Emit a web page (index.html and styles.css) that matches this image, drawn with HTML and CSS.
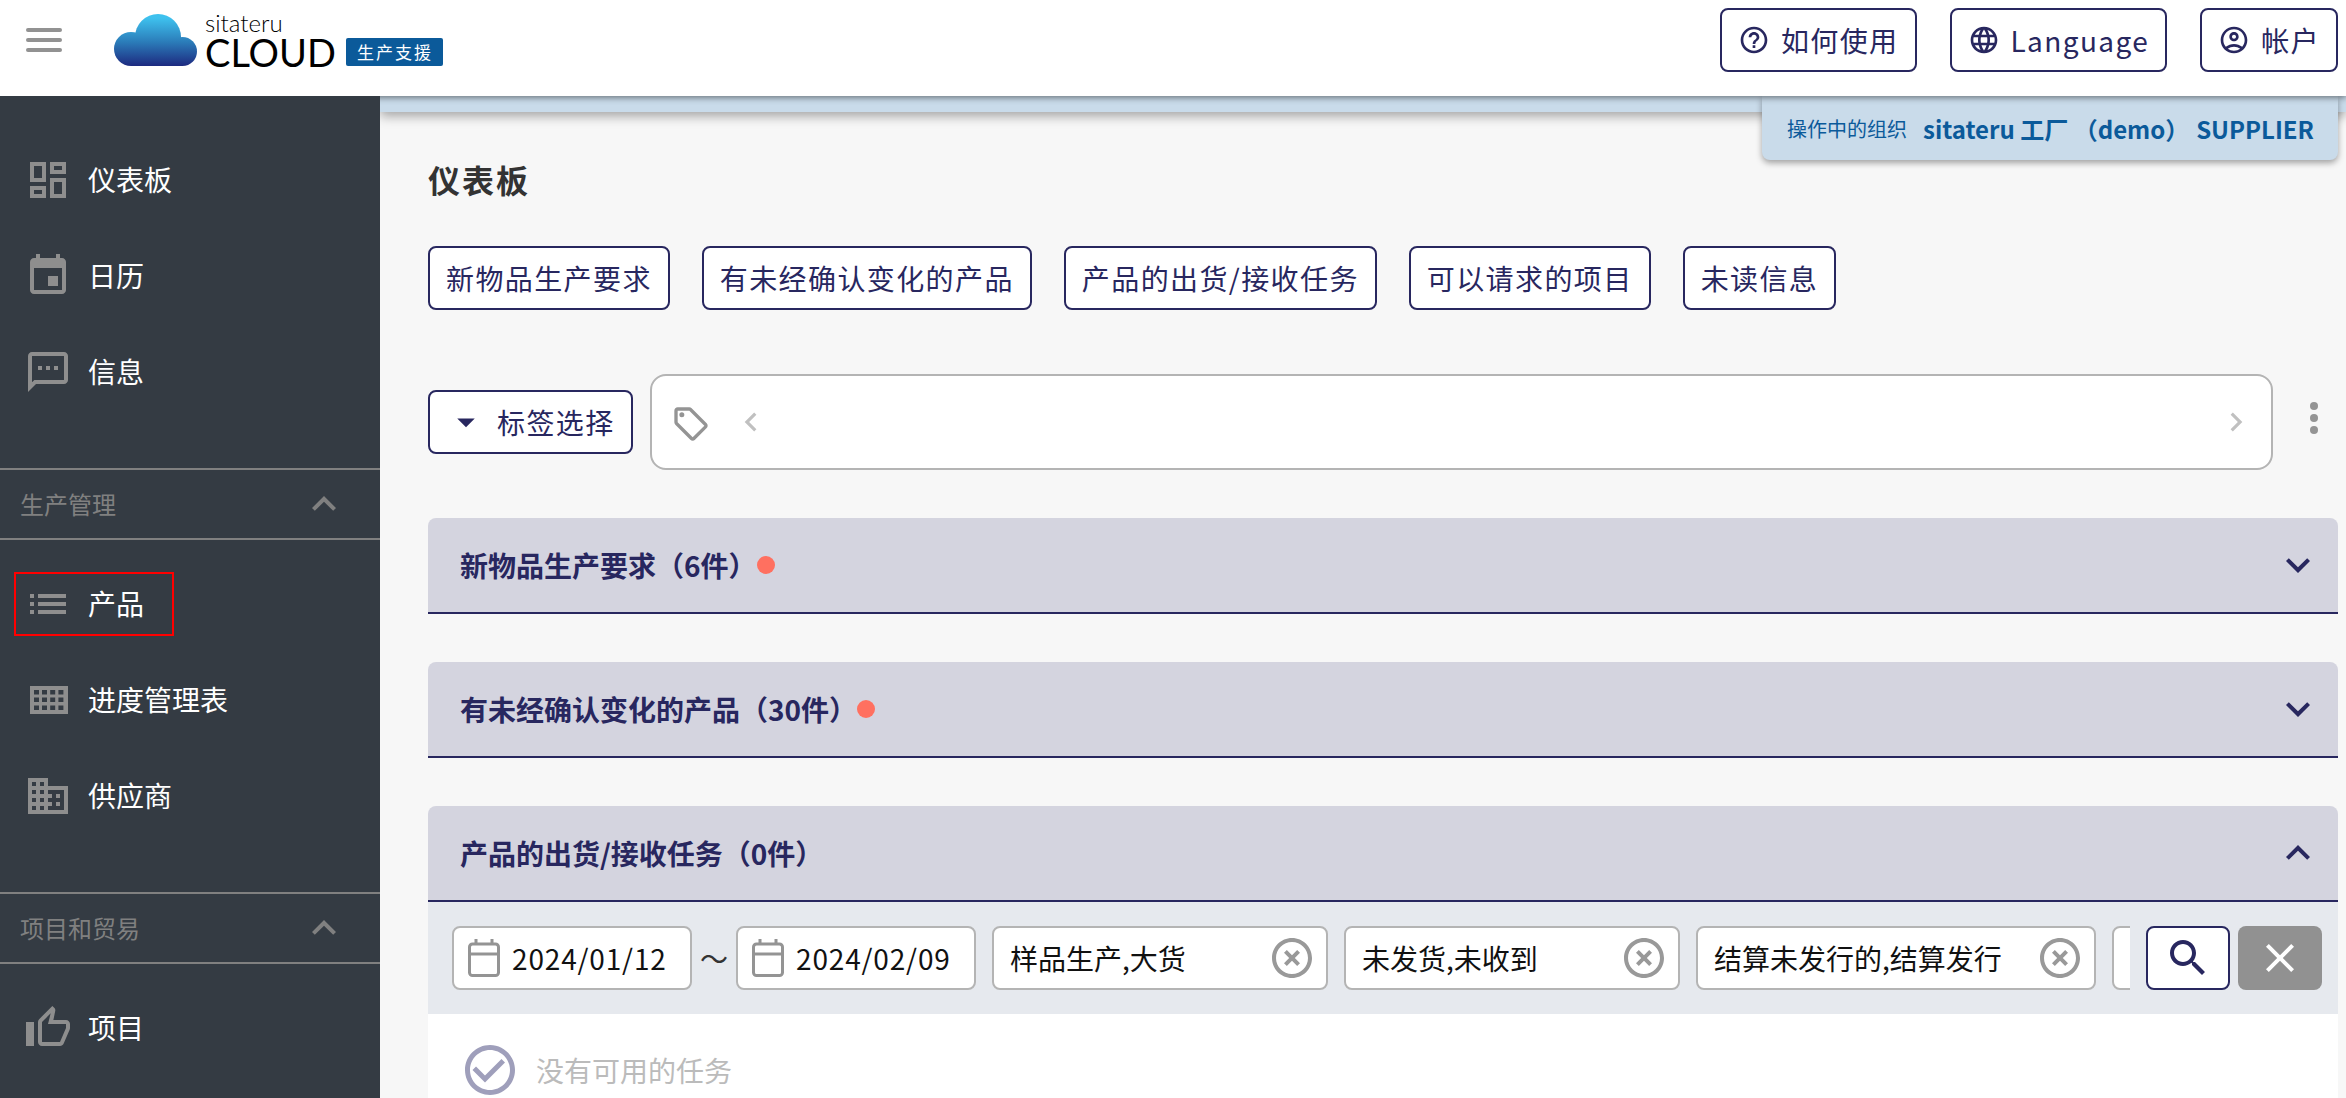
FILE: index.html
```html
<!DOCTYPE html>
<html lang="zh-CN">
<head>
<meta charset="utf-8">
<title>sitateru CLOUD</title>
<link rel="stylesheet" href="styles.css">
</head>
<body>
<header class="topbar">
  <svg class="hamburger" width="36" height="24" viewBox="0 0 36 24"><rect y="0" width="36" height="4" rx="2"/><rect y="10" width="36" height="4" rx="2"/><rect y="20" width="36" height="4" rx="2"/></svg>
  <div class="logo">
    <svg class="cloud" width="83" height="52" viewBox="0 0 83 52">
      <defs><linearGradient id="cg" gradientUnits="userSpaceOnUse" x1="0" y1="4" x2="0" y2="52"><stop offset="0" stop-color="#3ec1ee"/><stop offset=".5" stop-color="#2b7cb9"/><stop offset="1" stop-color="#1d2a80"/></linearGradient></defs>
      <g fill="url(#cg)"><circle cx="44" cy="23" r="23"/><circle cx="17" cy="35" r="17"/><circle cx="68.5" cy="37.5" r="14.5"/><rect x="17" y="28" width="52" height="24"/></g>
    </svg>
    <div class="wordmark"><span class="wm-small">sitateru</span><span class="wm-big">CLOUD</span></div>
    <span class="logo-badge">生产支援</span>
  </div>
  <nav class="top-actions">
    <a class="btn"><svg class="ic32" viewBox="0 0 24 24"><path d="M11 18h2v-2h-2v2zm1-16C6.48 2 2 6.48 2 12s4.48 10 10 10 10-4.48 10-10S17.52 2 12 2zm0 18c-4.41 0-8-3.59-8-8s3.59-8 8-8 8 3.59 8 8-3.59 8-8 8zm0-14c-2.21 0-4 1.79-4 4h2c0-1.1.9-2 2-2s2 .9 2 2c0 2-3 1.75-3 5h2c0-2.25 3-2.5 3-5 0-2.21-1.79-4-4-4z"/></svg>如何使用</a>
    <a class="btn"><svg class="ic32" viewBox="0 0 24 24"><path d="M11.99 2C6.47 2 2 6.48 2 12s4.47 10 9.99 10C17.52 22 22 17.52 22 12S17.52 2 11.99 2zm6.93 6h-2.95c-.32-1.25-.78-2.45-1.38-3.56 1.84.63 3.37 1.91 4.33 3.56zM12 4.04c.83 1.2 1.48 2.53 1.91 3.96h-3.82c.43-1.43 1.08-2.76 1.91-3.96zM4.26 14C4.1 13.36 4 12.69 4 12s.1-1.36.26-2h3.38c-.08.66-.14 1.32-.14 2 0 .68.06 1.34.14 2H4.26zm.82 2h2.95c.32 1.25.78 2.45 1.38 3.56-1.84-.63-3.37-1.9-4.33-3.56zm2.95-8H5.08c.96-1.66 2.49-2.93 4.33-3.56C8.81 5.55 8.35 6.75 8.03 8zM12 19.96c-.83-1.2-1.48-2.53-1.91-3.96h3.82c-.43 1.43-1.08 2.76-1.91 3.96zM14.34 14H9.66c-.09-.66-.16-1.32-.16-2 0-.68.07-1.35.16-2h4.68c.09.65.16 1.32.16 2 0 .68-.07 1.34-.16 2zm.25 5.56c.6-1.11 1.06-2.31 1.38-3.56h2.95c-.96 1.65-2.49 2.93-4.33 3.56zM16.36 14c.08-.66.14-1.32.14-2 0-.68-.06-1.34-.14-2h3.38c.16.64.26 1.31.26 2s-.1 1.36-.26 2h-3.38z"/></svg>Language</a>
    <a class="btn"><svg class="ic32" viewBox="0 0 24 24"><path d="M12 2C6.48 2 2 6.48 2 12s4.48 10 10 10 10-4.48 10-10S17.52 2 12 2zM7.35 18.5C8.66 17.56 10.26 17 12 17s3.34.56 4.65 1.5c-1.31.94-2.91 1.5-4.65 1.5s-3.34-.56-4.65-1.5zm10.79-1.38C16.45 15.8 14.32 15 12 15s-4.45.8-6.14 2.12C4.7 15.73 4 13.95 4 12c0-4.42 3.58-8 8-8s8 3.58 8 8c0 1.95-.7 3.73-1.86 5.12zM12 6c-1.93 0-3.5 1.57-3.5 3.5S10.07 13 12 13s3.5-1.57 3.5-3.5S13.93 6 12 6zm0 5c-.83 0-1.5-.67-1.5-1.5S11.17 8 12 8s1.5.67 1.5 1.5S12.83 11 12 11z"/></svg>帐户</a>
  </nav>
</header>

<div class="shell">
  <aside class="sidebar">
    <ul class="nav-group first">
      <li class="nav-item"><svg class="ic48" viewBox="0 0 24 24"><path d="M19 5v2h-4V5h4M9 5v6H5V5h4m10 8v6h-4v-6h4M9 17v2H5v-2h4M21 3h-8v6h8V3zM11 3H3v10h8V3zm10 8h-8v10h8V11zm-10 4H3v6h8v-6z"/></svg>仪表板</li>
      <li class="nav-item"><svg class="ic48" viewBox="0 0 24 24"><path d="M17 12h-5v5h5v-5zM16 1v2H8V1H6v2H5c-1.11 0-1.99.9-1.99 2L3 19c0 1.1.89 2 2 2h14c1.1 0 2-.9 2-2V5c0-1.1-.9-2-2-2h-1V1h-2zm3 18H5V8h14v11z"/></svg>日历</li>
      <li class="nav-item"><svg class="ic48" viewBox="0 0 24 24"><path d="M20 2H4c-1.1 0-1.99.9-1.99 2L2 22l4-4h14c1.1 0 2-.9 2-2V4c0-1.1-.9-2-2-2zm0 14H5.17L4 17.17V4h16v12zM7 9h2v2H7zm4 0h2v2h-2zm4 0h2v2h-2z"/></svg>信息</li>
    </ul>
    <div class="nav-section">生产管理<svg class="ic48" viewBox="0 0 24 24"><path d="M12 8l-6 6 1.41 1.41L12 10.83l4.59 4.58L18 14z"/></svg></div>
    <ul class="nav-group">
      <li class="nav-item marked"><svg class="ic48" viewBox="0 0 24 24"><path d="M3 13h2v-2H3v2zm0 4h2v-2H3v2zm0-8h2V7H3v2zm4 4h14v-2H7v2zm0 4h14v-2H7v2zM7 7v2h14V7H7z"/></svg>产品</li>
      <li class="nav-item"><svg class="ic48" viewBox="0 0 48 48"><path fill-rule="evenodd" d="M6 10h38v28H6zM10 14v4.500h5V14zm8 0v4.500h5V14zm8.200 0v4.500h5V14zm8.200 0v4.500h5V14zM10 21.500V26h5v-4.500zm8 0V26h5v-4.500zm8.200 0V26h5v-4.500zm8.200 0V26h5v-4.500zM10 29.500V34h5v-4.500zm8 0V34h5v-4.500zm8.200 0V34h5v-4.500zm8.200 0V34h5v-4.500z"/></svg>进度管理表</li>
      <li class="nav-item"><svg class="ic48" viewBox="0 0 24 24"><path d="M12 7V3H2v18h20V7H12zM6 19H4v-2h2v2zm0-4H4v-2h2v2zm0-4H4V9h2v2zm0-4H4V5h2v2zm4 12H8v-2h2v2zm0-4H8v-2h2v2zm0-4H8V9h2v2zm0-4H8V5h2v2zm10 12h-8v-2h2v-2h-2v-2h2v-2h-2V9h8v10zm-2-8h-2v2h2v-2zm0 4h-2v2h2v-2z"/></svg>供应商</li>
    </ul>
    <div class="nav-section">项目和贸易<svg class="ic48" viewBox="0 0 24 24"><path d="M12 8l-6 6 1.41 1.41L12 10.83l4.59 4.58L18 14z"/></svg></div>
    <ul class="nav-group">
      <li class="nav-item"><svg class="ic48" viewBox="0 0 24 24"><path d="M9 21h9c.83 0 1.54-.5 1.84-1.22l3.02-7.05c.09-.23.14-.47.14-.73v-2c0-1.1-.9-2-2-2h-6.31l.95-4.57.03-.32c0-.41-.17-.79-.44-1.06L14.17 1 7.58 7.59C7.22 7.95 7 8.45 7 9v10c0 1.1.9 2 2 2zM9 9l4.34-4.34L12 10h9v2l-3 7H9V9zM1 9h4v12H1z"/></svg>项目</li>
    </ul>
  </aside>

  <main class="main">
    <div class="org-strip"></div>
    <div class="org-tab"><span class="org-label">操作中的组织</span><span class="org-name">sitateru 工厂 （demo）</span><span class="org-role">SUPPLIER</span></div>
    <div class="content">
      <h1 class="title">仪表板</h1>
      <div class="quick-links">
        <a class="btn">新物品生产要求</a>
        <a class="btn">有未经确认变化的产品</a>
        <a class="btn">产品的出货/接收任务</a>
        <a class="btn">可以请求的项目</a>
        <a class="btn">未读信息</a>
      </div>
      <div class="tag-row">
        <a class="btn tag-btn"><svg class="caret" viewBox="0 0 24 24"><path d="M7 10l5 5 5-5z"/></svg>标签选择</a>
        <div class="tag-box">
          <svg class="tag-icon" viewBox="0 0 24 24"><path d="M21.41 11.58l-9-9C12.05 2.22 11.55 2 11 2H4c-1.1 0-2 .9-2 2v7c0 .55.22 1.05.59 1.42l9 9c.36.36.86.58 1.41.58s1.05-.22 1.41-.59l7-7c.37-.36.59-.86.59-1.41s-.23-1.06-.59-1.42zM13 20.01L4 11V4h7v-.01l9 8.99-7 7.03z"/><circle cx="6.500" cy="6.500" r="1.500"/></svg>
          <svg class="tag-chev" viewBox="0 0 24 24"><path d="M15.41 7.41L14 6l-6 6 6 6 1.41-1.41L10.83 12z"/></svg>
          <span class="grow"></span>
          <svg class="tag-chev" viewBox="0 0 24 24"><path d="M10 6L8.590 7.410 13.170 12l-4.580 4.590L10 18l6-6z"/></svg>
        </div>
        <svg class="more" viewBox="0 0 48 48"><circle cx="24" cy="12" r="4"/><circle cx="24" cy="24" r="4"/><circle cx="24" cy="36" r="4"/></svg>
      </div>

      <section class="acc">
        <div class="acc-head"><span class="acc-title">新物品生产要求（6件）</span><i class="dot"></i><svg class="ic48 acc-chev" viewBox="0 0 24 24"><path d="M16.590 8.590L12 13.170 7.410 8.590 6 10l6 6 6-6z"/></svg></div>
      </section>
      <section class="acc">
        <div class="acc-head"><span class="acc-title">有未经确认变化的产品（30件）</span><i class="dot"></i><svg class="ic48 acc-chev" viewBox="0 0 24 24"><path d="M16.590 8.590L12 13.170 7.410 8.590 6 10l6 6 6-6z"/></svg></div>
      </section>
      <section class="acc">
        <div class="acc-head"><span class="acc-title">产品的出货/接收任务（0件）</span><svg class="ic48 acc-chev" viewBox="0 0 24 24"><path d="M12 8l-6 6 1.41 1.41L12 10.83l4.59 4.58L18 14z"/></svg></div>
        <div class="filter-bar">
          <div class="filters">
            <div class="field date"><svg class="cal" viewBox="0 0 32 38"><path d="M8 0v6M24 0v6"/><rect x="1.500" y="5" width="29" height="31.500" rx="3"/><path d="M1.500 15h29"/></svg>2024/01/12</div>
            <span class="tilde">～</span>
            <div class="field date"><svg class="cal" viewBox="0 0 32 38"><path d="M8 0v6M24 0v6"/><rect x="1.500" y="5" width="29" height="31.500" rx="3"/><path d="M1.500 15h29"/></svg>2024/02/09</div>
            <div class="field sel">样品生产,大货<svg class="ic48 clear" viewBox="0 0 24 24"><path d="M14.59 8L12 10.59 9.41 8 8 9.41 10.59 12 8 14.59 9.41 16 12 13.41 14.59 16 16 14.59 13.41 12 16 9.41 14.59 8zM12 2C6.47 2 2 6.47 2 12s4.47 10 10 10 10-4.47 10-10S17.53 2 12 2zm0 18c-4.41 0-8-3.59-8-8s3.59-8 8-8 8 3.59 8 8-3.59 8-8 8z"/></svg></div>
            <div class="field sel">未发货,未收到<svg class="ic48 clear" viewBox="0 0 24 24"><path d="M14.59 8L12 10.59 9.41 8 8 9.41 10.59 12 8 14.59 9.41 16 12 13.41 14.59 16 16 14.59 13.41 12 16 9.41 14.59 8zM12 2C6.47 2 2 6.47 2 12s4.47 10 10 10 10-4.47 10-10S17.53 2 12 2zm0 18c-4.41 0-8-3.59-8-8s3.59-8 8-8 8 3.59 8 8-3.59 8-8 8z"/></svg></div>
            <div class="field sel wide">结算未发行的,结算发行<svg class="ic48 clear" viewBox="0 0 24 24"><path d="M14.59 8L12 10.59 9.41 8 8 9.41 10.59 12 8 14.59 9.41 16 12 13.41 14.59 16 16 14.59 13.41 12 16 9.41 14.59 8zM12 2C6.47 2 2 6.47 2 12s4.47 10 10 10 10-4.47 10-10S17.53 2 12 2zm0 18c-4.41 0-8-3.59-8-8s3.59-8 8-8 8 3.59 8 8-3.59 8-8 8z"/></svg></div>
            <div class="field sel"></div>
          </div>
          <a class="icon-btn search"><svg class="ic48" viewBox="0 0 24 24"><path d="M15.5 14h-.79l-.28-.27C15.41 12.59 16 11.11 16 9.5 16 5.91 13.09 3 9.5 3S3 5.91 3 9.5 5.91 16 9.5 16c1.61 0 3.09-.59 4.23-1.57l.27.28v.79l5 4.99L20.49 19l-4.99-5zm-6 0C7.010 14 5 11.990 5 9.500S7.010 5 9.500 5 14 7.010 14 9.500 11.990 14 9.500 14z"/></svg></a>
          <a class="icon-btn reset"><svg class="ic48" viewBox="0 0 24 24"><path d="M19 6.410L17.590 5 12 10.590 6.410 5 5 6.410 10.590 12 5 17.590 6.410 19 12 13.410 17.590 19 19 17.590 13.410 12z"/></svg></a>
        </div>
        <div class="acc-body">
          <svg class="done" viewBox="0 0 24 24"><path d="M16.590 7.580L10 14.170l-3.590-3.580L5 12l5 5 8-8zM12 2C6.480 2 2 6.480 2 12s4.480 10 10 10 10-4.480 10-10S17.520 2 12 2zm0 18c-4.420 0-8-3.580-8-8s3.580-8 8-8 8 3.580 8 8-3.580 8-8 8z"/></svg>
          <span class="empty-text">没有可用的任务</span>
        </div>
      </section>
    </div>
  </main>
</div>
</body>
</html>
```

FILE: styles.css
```css
*, *::before, *::after { box-sizing: border-box; }
html, body { margin: 0; padding: 0; height: 100%; overflow: hidden; }
body {
  display: flex;
  flex-direction: column;
  background: #f7f7f7;
  font-family: "Noto Sans CJK SC", "Noto Sans", sans-serif;
  font-size: 28px;
  color: #111;
}
ul { list-style: none; margin: 0; padding: 0; }
svg { display: block; flex: none; }
.ic48 { width: 48px; height: 48px; }
.ic32 { width: 32px; height: 32px; fill: #28275f; }

/* top bar */
.topbar {
  position: relative;
  z-index: 1;
  flex: none;
  display: flex;
  align-items: flex-start;
  height: 96px;
  padding: 8px 8px 0 26px;
  background: #fff;
  box-shadow: 0 2px 6px rgba(0, 0, 0, .45);
}
.hamburger { fill: #929292; margin-top: 20px; }
.logo { display: flex; align-items: flex-end; margin: 6px 0 0 52px; height: 52px; }
.wordmark { display: flex; flex-direction: column; margin-left: 8px; font-family: Lato, sans-serif; color: #000; }
.wm-small { font-size: 24px; line-height: 22px; font-weight: 300; margin-bottom: 4px; }
.wm-big { font-size: 38px; line-height: 28px; font-weight: 400; }
.logo-badge {
  margin-left: 10px;
  height: 28px;
  padding: 0 10px 0 11px;
  background: #0b5a9a;
  border-radius: 2px;
  color: #fff;
  font-size: 17px;
  line-height: 28px;
  letter-spacing: 2px;
  white-space: nowrap;
}
.top-actions { display: flex; gap: 33px; margin-left: auto; }
.btn {
  display: inline-flex;
  align-items: center;
  gap: 11px;
  height: 64px;
  padding: 0 16px;
  border: 2px solid #28275f;
  border-radius: 8px;
  background: #fff;
  color: #28275f;
  font-size: 28px;
  letter-spacing: 1.4px;
  white-space: nowrap;
}

/* shell */
.shell { flex: 1; display: flex; min-height: 0; }

/* sidebar */
.sidebar {
  position: relative;
  z-index: 2;
  flex: none;
  width: 380px;
  background: #343b43;
  color: #fff;
}
.nav-group { padding: 16px 0 48px; }
.nav-group.first { padding-top: 36px; }
.nav-item {
  position: relative;
  display: flex;
  align-items: center;
  gap: 16px;
  height: 96px;
  padding: 0 0 2px 24px;
  font-size: 28px;
}
.nav-item svg { fill: #8e8e8e; margin-top: 2px; }
.nav-item.marked::after {
  content: "";
  position: absolute;
  left: 14px;
  top: 16px;
  width: 160px;
  height: 64px;
  border: 2px solid #f00;
}
.nav-section {
  display: flex;
  align-items: center;
  justify-content: space-between;
  height: 72px;
  padding: 0 32px 2px 20px;
  border-top: 2px solid #808080;
  border-bottom: 2px solid #808080;
  color: #808080;
  font-size: 24px;
}
.nav-section svg { fill: #808080; margin-top: 2px; }

/* main */
.main { position: relative; flex: 1; min-width: 0; }
.org-strip {
  height: 16px;
  background: #c9dbea;
  box-shadow: 0 4px 12px rgba(0, 0, 0, .35);
}
.org-tab {
  position: absolute;
  top: 0;
  right: 8px;
  width: 576px;
  height: 64px;
  padding: 0 24px 0 25px;
  display: flex;
  align-items: center;
  background: #c9dbea;
  border-radius: 0 0 8px 8px;
  box-shadow: 0 3px 6px rgba(0, 0, 0, .35);
  color: #0b5a9a;
  white-space: nowrap;
}
.org-label { font-size: 20px; margin-right: 16px; }
.org-name, .org-role { font-size: 24px; font-weight: 700; }
.org-role { margin-left: auto; }

.content { padding: 44px 8px 0 48px; }
.title { margin: 0; font-size: 32px; line-height: 46px; font-weight: 700; letter-spacing: 2px; color: #333; }
.quick-links { display: flex; gap: 32px; margin-top: 44px; }
.tag-row { display: flex; align-items: center; gap: 17px; margin-top: 64px; }
.tag-btn { padding: 0 16px 0 15px; gap: 10px; }
.caret { width: 42px; height: 42px; fill: #28275f; }
.tag-box {
  flex: 1;
  display: flex;
  align-items: center;
  height: 96px;
  padding: 0 16px 0 19px;
  border: 2px solid #b4b4b4;
  border-radius: 16px;
  background: #fff;
}
.tag-icon { width: 40px; height: 40px; fill: #949494; margin-top: 4px; }
.tag-chev { width: 38px; height: 38px; fill: #c0c0c0; }
.tag-box .tag-icon + .tag-chev { margin-left: 21px; }
.grow { flex: 1; }
.more { width: 48px; height: 48px; fill: #949494; margin-top: -8px; }

/* accordions */
.acc { margin-top: 48px; }
.acc-head {
  display: flex;
  align-items: center;
  height: 96px;
  padding: 0 16px 0 32px;
  background: #d4d4df;
  border-bottom: 2px solid #28275f;
  border-radius: 8px 8px 0 0;
  color: #28275f;
}
.acc-title { font-size: 28px; font-weight: 700; }
.dot { width: 18px; height: 18px; margin-left: 0; border-radius: 50%; background: #ff7060; }
.acc-chev { margin-left: auto; fill: #28275f; }

.filter-bar {
  display: flex;
  align-items: center;
  height: 112px;
  padding: 0 16px 0 24px;
  background: #e6e9ee;
}
.filters { flex: 1; min-width: 0; display: flex; align-items: center; gap: 16px; overflow: hidden; margin-right: 16px; }
.field {
  flex: none;
  display: flex;
  align-items: center;
  height: 64px;
  border: 2px solid #b4b4b4;
  border-radius: 8px;
  background: #fff;
  font-size: 28px;
  color: #111;
  white-space: nowrap;
}
.date { width: 240px; padding-left: 14px; gap: 12px; letter-spacing: .84px; }
.cal { width: 32px; height: 38px; fill: none; stroke: #949494; stroke-width: 3; }
.tilde { flex: none; width: 44px; margin: 0 -16px; text-align: center; font-size: 28px; color: #333; }
.sel { width: 336px; padding: 0 10px 0 16px; justify-content: space-between; }
.sel.wide { width: 400px; }
.clear { fill: #999; }
.icon-btn {
  flex: none;
  display: flex;
  align-items: center;
  justify-content: center;
  width: 84px;
  height: 64px;
  border-radius: 8px;
}
.search { border: 2px solid #28275f; background: #fff; fill: #28275f; }
.reset { margin-left: 8px; background: #919191; fill: #fff; }
.acc-body { display: flex; align-items: center; gap: 16px; height: 120px; padding: 26px 32px 34px; background: #fff; }
.done { width: 60px; height: 60px; fill: #9f9fbb; }
.empty-text { font-size: 28px; color: #bbb; }
```
